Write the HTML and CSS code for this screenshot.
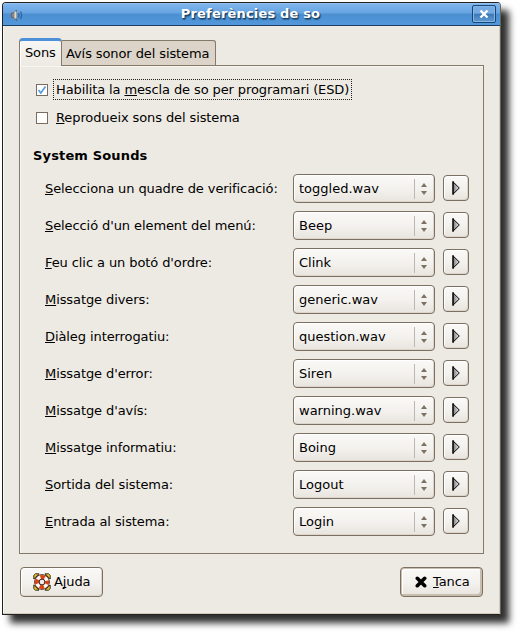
FILE: index.html
```
<!DOCTYPE html>
<html lang="ca">
<head>
<meta charset="utf-8">
<title>Preferències de so</title>
<link rel="stylesheet" href="styles.css">
</head>
<body>
<main class="window">
  <header class="titlebar">
    <svg class="speaker" width="15" height="14" viewBox="0 0 15 14"><path d="M1.500 5h2L6.500 2v10.500L3.500 9.500h-2z" fill="#8d8985" stroke="#68635f"/><path d="M5.500 3.500v7" stroke="#ddd9d2" stroke-width="2"/><path d="M8.500 5q1.300 2.300 0 4.500M10.500 3.500q2.200 3.800 0 7.500" fill="none" stroke="#2866a8" stroke-width="1.300"/></svg>
    <h1>Preferències de so</h1>
    <button class="close" aria-label="Tanca"><svg width="10" height="10" viewBox="0 0 10 10"><path d="M1.500 1.500l7 7M8.500 1.500l-7 7" stroke="#fff" stroke-width="2.300"/></svg></button>
  </header>
  <div class="content">
    <nav class="tabs"><span class="tab active">Sons</span><span class="tab other">Avís sonor del sistema</span></nav>
    <section class="panel">
      <div class="check first"><span class="box"><svg width="10" height="10" viewBox="0 0 10 10"><path d="M1.500 5l2.300 3L8.500 1.500" fill="none" stroke="#5a9fdf" stroke-width="1.800"/></svg></span><span class="focus">Habilita la <u>m</u>escla de so per programari (ESD)</span></div>
      <div class="check second"><span class="box"></span><span class="plain"><u>R</u>eprodueix sons del sistema</span></div>
      <h2>System Sounds</h2>
      <div class="rows" id="rows"></div>
    </section>
    <footer class="actions">
      <button class="action help"><svg width="18" height="18" viewBox="0 0 18 18"><path d="M.8 6V2.300L2.500.8H6zM12 .8h3.500l1.700 1.500V6zM17.200 12v3.700l-1.700 1.500H12zM6 17.200H2.500L.8 15.700V12z" fill="#ecc832" stroke="#29200c" stroke-width=".9"/><circle cx="9" cy="9" r="7.800" fill="#29150e"/><circle cx="9" cy="9" r="5.100" fill="none" stroke="#fff5ed" stroke-width="4"/><circle cx="9" cy="9" r="5.100" fill="none" stroke="#dc4216" stroke-width="4" stroke-dasharray="4.406 3.605" stroke-dashoffset="2.203"/><circle cx="9" cy="9" r="2.900" fill="#f1efeb" stroke="#29150e" stroke-width=".9"/></svg><span>A<u>j</u>uda</span></button>
      <button class="action default"><svg width="12" height="12" viewBox="0 0 12 12"><path d="M2.300 2.300l7.400 7.400M9.700 2.300L2.300 9.700" stroke="#000" stroke-width="3.600" stroke-linecap="round"/></svg><span><u>T</u>anca</span></button>
    </footer>
  </div>
</main>
<svg width="0" height="0"><defs><linearGradient id="arrow"><stop offset="0" stop-color="#777"/><stop offset="1" stop-color="#eee"/></linearGradient></defs></svg>
<script src="rows.js"></script>
</body>
</html>
```
FILE: styles.css
```
* { box-sizing: border-box; }
body {
  margin: 0;
  padding: 2px;
  height: 633px;
  overflow: hidden;
  background: #fff;
  color: #000;
  font: 13px/16px "DejaVu Sans", sans-serif;
}
u { text-decoration: underline; text-decoration-thickness: 1px; text-underline-offset: 1px; text-decoration-skip-ink: none; }
svg { display: block; flex: none; }
button { margin: 0; padding: 0; font: inherit; color: inherit; }
.window {
  width: 499px;
  height: 613px;
  border: 1px solid #24221f;
  border-right-color: #69645b;
  border-radius: 4px 4px 0 0;
  background: #edeae3;
  box-shadow: inset -1px -1px #d2cbc0, inset 1px 0 #faf8f5, 8px 8px 7px rgba(0, 0, 0, .82);
}
.titlebar {
  display: flex;
  align-items: center;
  height: 23px;
  padding: 0 4px 0 7px;
  border-bottom: 1px solid #193f65;
  border-radius: 3px 3px 0 0;
  background: linear-gradient(#a7cff7 0, #7fb5ec 1px, #66a4e1 10px, #4b8fd1 11px, #5197d9 21px);
}
.speaker { margin-top: 2px; }
.titlebar h1 { flex: 1; margin: 0; padding-left: 4px; text-align: center; font-size: 13px; line-height: 20px; letter-spacing: .17px; color: #fff; text-shadow: 1px 1px 1px #173d62, 1px 2px 1px rgba(23, 61, 98, .6); }
.close { display: flex; align-items: center; justify-content: center; width: 24px; height: 18px; border: 1px solid #194775; border-radius: 2px; background: linear-gradient(#75abe2 0 45%, #3b79b7 50%, #629bd3); box-shadow: inset 0 0 0 1px #83b5e7; }
.content { padding: 12px 16px 0; }
.tabs { display: flex; align-items: flex-end; height: 27px; }
.tab { border: 1px solid #857a6a; border-bottom: 0; white-space: nowrap; }
.active { position: relative; width: 43px; height: 28px; padding: 4px 0 0 5px; border-top: 3px solid #4c91d7; border-radius: 4px 4px 0 0; background: linear-gradient(#f7f6f3, #edeae3); align-self: flex-start; box-shadow: inset 1px 0 #fff; letter-spacing: -.15px; }
.other { width: 154px; height: 25px; padding: 5px 0 0 4px; border-left: 0; border-radius: 0 3px 0 0; background: #dcd4c9; letter-spacing: -.1px; }
.panel { height: 489px; padding: 9px 13px 0; border: 1px solid #857a6a; box-shadow: inset 1px 1px #f8f6f2; }
.check { display: flex; align-items: center; height: 28px; padding-left: 3px; }
.second { padding-top: 2px; }
.box { display: flex; align-items: center; justify-content: center; width: 12px; height: 12px; border: 1px solid #786d60; background: #fff; }
.first .box { margin-top: 1px; }
.focus { height: 21px; margin-left: 5px; padding: 2px; border: 1px dotted #222; letter-spacing: -.11px; }
.plain { margin-left: 8px; letter-spacing: -.1px; }
.panel h2 { margin: 17px 0 10px; font-size: 13px; line-height: 16px; letter-spacing: .15px; }
.rows { display: grid; row-gap: 8px; padding-left: 12px; }
.row { display: grid; grid-template-columns: 248px 142px 34px; align-items: center; height: 29px; }
.label { letter-spacing: -.09px; }
.row .play { margin: 0 0 2px 8px; }
.select, .play, .action { border: 1px solid #7b7061; border-radius: 4px; background: linear-gradient(#faf9f7, #f3f1ed 55%, #e8e4de); box-shadow: inset 1px 1px #fff, inset -1px -1px #ddd5cb; }
.select { display: flex; align-items: center; width: 142px; height: 29px; padding: 0 7px 0 5px; }
.value { flex: 1; }
.divider { width: 1px; height: 20px; margin-right: 6px; background: #bdb7af; }
.play { display: flex; align-items: center; justify-content: center; width: 26px; height: 26px; }
.actions { display: flex; justify-content: space-between; padding: 13px 1px 0; }
.action { display: flex; align-items: center; width: 83px; height: 30px; }
.action span { letter-spacing: -.1px; }
.help { padding-left: 12px; gap: 3px; }
.default { padding-left: 14px; gap: 6px; box-shadow: inset 0 0 0 1px #c7beb0, inset -2px -2px #c7beb0, inset 2px 2px #fff; }
```
FILE: rows.js
```
const sounds = [
  ["Selecciona un quadre de verificació:", "toggled.wav"],
  ["Selecció d'un element del menú:", "Beep"],
  ["Feu clic a un botó d'ordre:", "Clink"],
  ["Missatge divers:", "generic.wav"],
  ["Diàleg interrogatiu:", "question.wav"],
  ["Missatge d'error:", "Siren"],
  ["Missatge d'avís:", "warning.wav"],
  ["Missatge informatiu:", "Boing"],
  ["Sortida del sistema:", "Logout"],
  ["Entrada al sistema:", "Login"]
];
document.getElementById("rows").innerHTML = sounds.map(([label, value]) => `
  <div class="row">
    <span class="label"><u>${label[0]}</u>${label.slice(1)}</span>
    <span class="select"><span class="value">${value}</span><span class="divider"></span><svg width="6" height="12" viewBox="0 0 6 12"><path d="M0 4l3-4 3 4zM0 8h6l-3 4z" fill="#7b7264"/></svg></span>
    <button class="play" aria-label="Reprodueix"><svg width="8" height="14" viewBox="0 0 8 14"><path d="M1 .8v12.400L7.300 7z" fill="url(#arrow)" stroke="#000"/><path d="M1 0v14" stroke="#000"/></svg></button>
  </div>`).join("");
```
